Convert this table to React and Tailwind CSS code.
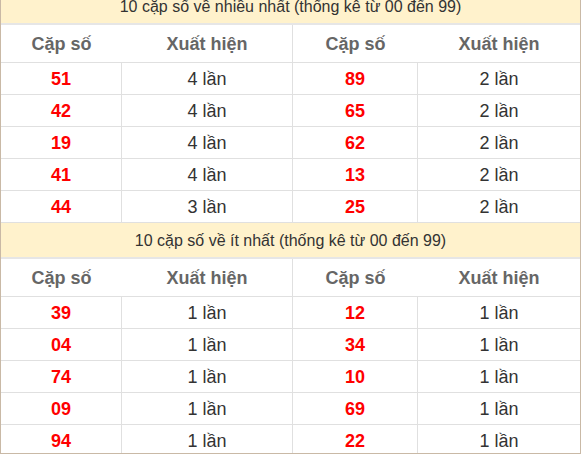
import React from 'react';

const most = [
  ['51', '4', '89', '2'],
  ['42', '4', '65', '2'],
  ['19', '4', '62', '2'],
  ['41', '4', '13', '2'],
  ['44', '3', '25', '2'],
];

const least = [
  ['39', '1', '12', '1'],
  ['04', '1', '34', '1'],
  ['74', '1', '10', '1'],
  ['09', '1', '69', '1'],
  ['94', '1', '22', '1'],
];

const Section = ({ title, rows }) => (
  <div>
    <div className="h-[36px] pt-[2px] flex items-center justify-center bg-[#fff2cc] border-b-2 border-[#e6e6e6] text-[16px] text-[#333]">
      {title}
    </div>
    <div className="grid grid-cols-[292px_1fr] h-[38px] border-b border-[#e0e0e0] text-[18px] font-bold text-[#666]">
      <div className="grid grid-cols-[121px_1fr] items-center pt-[2px] border-r border-[#e0e0e0]">
        <span className="text-center">Cặp số</span>
        <span className="text-center">Xuất hiện</span>
      </div>
      <div className="grid grid-cols-[125px_1fr] items-center pt-[2px]">
        <span className="text-center">Cặp số</span>
        <span className="text-center">Xuất hiện</span>
      </div>
    </div>
    {rows.map((r, i) => (
      <div
        key={i}
        className="grid grid-cols-[121px_171px_125px_1fr] h-[32px] border-b border-[#e0e0e0] text-[18px]"
      >
        <div className="flex items-center justify-center pt-[2px] border-r border-[#e0e0e0] font-bold text-[#ff0000]">{r[0]}</div>
        <div className="flex items-center justify-center pt-[2px] border-r border-[#e0e0e0] text-[#333]">{r[1]} lần</div>
        <div className="flex items-center justify-center pt-[2px] border-r border-[#e0e0e0] font-bold text-[#ff0000]">{r[2]}</div>
        <div className="flex items-center justify-center pt-[2px] text-[#333]">{r[3]} lần</div>
      </div>
    ))}
  </div>
);

export default function App() {
  return (
    <div className="w-[581px] h-[454px] overflow-hidden bg-white border-x border-b border-[#c9b9a6] font-['Liberation_Sans',Arial,sans-serif]">
      <div className="-mt-[11px]">
        <Section title="10 cặp số về nhiều nhất (thống kê từ 00 đến 99)" rows={most} />
        <Section title="10 cặp số về ít nhất (thống kê từ 00 đến 99)" rows={least} />
      </div>
    </div>
  );
}
